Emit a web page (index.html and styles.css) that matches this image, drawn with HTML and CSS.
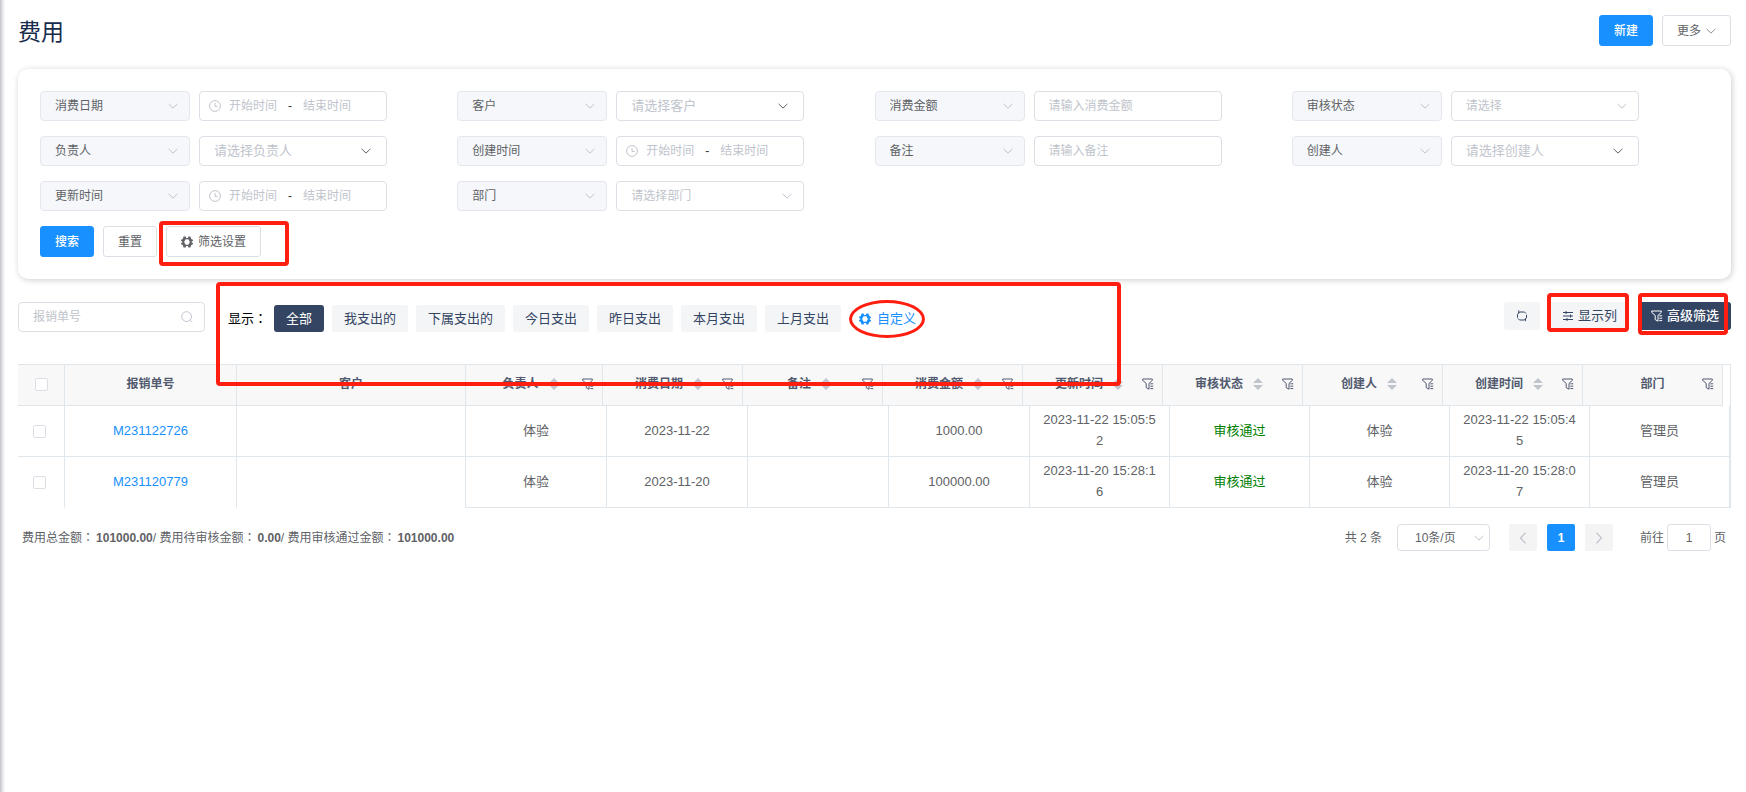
FILE: index.html
```html
<!DOCTYPE html>
<html lang="zh-CN">
<head>
<meta charset="utf-8">
<title>费用</title>
<link rel="stylesheet" href="styles.css">
</head>
<body>
<svg class="sprite" aria-hidden="true">
  <symbol id="chevron" viewBox="0 0 10 10"><path d="M.6 2.9 5 7.1l4.4-4.2" fill="none" stroke="currentColor"/></symbol>
  <symbol id="clock" viewBox="0 0 12 12"><circle cx="6" cy="6" r="5.4" fill="none" stroke="currentColor"/><path d="M6 3v3.4h2.6" fill="none" stroke="currentColor"/></symbol>
  <symbol id="gear" viewBox="0 0 12 12"><path fill="currentColor" fill-rule="evenodd" d="M2.600.6h2l.5 1.300h1.800L7.400.6h2l.9 2.300 1.600.8V5l-1.200.5v1l1.200.5v1.300l-1.600.8-.9 2.300h-2l-.5-1.300H5.100l-.5 1.300h-2l-.9-2.300-1.600-.8V7l1.200-.5v-1L.1 5V3.700l1.600-.8zM4.600 3.300 3.100 6l1.500 2.700h2.800L8.900 6 7.400 3.300z"/></symbol>
  <symbol id="search" viewBox="0 0 12 12"><circle cx="5.6" cy="5.6" r="4.9" fill="none" stroke="currentColor"/><path d="m9.2 9.4 2 2" stroke="currentColor"/></symbol>
  <symbol id="refresh" viewBox="0 0 12 12"><path d="M1.500 7.600V4.400L3.600 2H8.500L10 3.500M10.500 4.800v3L8.400 10H3.500L2 8.500M2.800.4v2.800M9.400 8.400v2.800" fill="none" stroke="currentColor"/></symbol>
  <symbol id="sliders" viewBox="0 0 12 12"><path d="M1 2.500h10M1 6h10M1 9.500h10M4 1v3M8.500 4.500v3M5 8v3" fill="none" stroke="currentColor"/></symbol>
  <symbol id="filter" viewBox="0 0 12 12"><path d="M.7 1h9.600v1.400L7 5.400v5.800L4.200 9.600V5.400L.7 2.400zM8.300 5.800h2.900M8.300 8.200h2.900M8.300 10.600h2.900" fill="none" stroke="currentColor"/></symbol>
  <symbol id="caret" viewBox="0 0 10 12"><path d="M5 0l5 5H0zM0 7h10l-5 5z" fill="currentColor"/></symbol>
</svg>
<main class="page">
  <header class="page-head">
    <h1>费用</h1>
    <div class="head-actions">
      <button class="btn primary">新建</button>
      <button class="btn">更多 <svg class="i10 soft"><use href="#chevron"/></svg></button>
    </div>
  </header>

  <form class="card">
    <div class="filters">
      <div class="filter">
        <div class="field key"><select aria-label="条件"><option>消费日期</option></select><svg class="i10"><use href="#chevron"/></svg></div>
        <div class="field range"><svg class="i12"><use href="#clock"/></svg><input aria-label="消费日期开始" placeholder="开始时间"><span>-</span><input aria-label="消费日期结束" placeholder="结束时间"></div>
      </div>
      <div class="filter">
        <div class="field key"><select aria-label="条件"><option>客户</option></select><svg class="i10"><use href="#chevron"/></svg></div>
        <div class="field pick"><select aria-label="客户"><option>请选择客户</option></select><svg class="i10"><use href="#chevron"/></svg></div>
      </div>
      <div class="filter">
        <div class="field key"><select aria-label="条件"><option>消费金额</option></select><svg class="i10"><use href="#chevron"/></svg></div>
        <div class="field"><input aria-label="消费金额" placeholder="请输入消费金额"></div>
      </div>
      <div class="filter">
        <div class="field key"><select aria-label="条件"><option>审核状态</option></select><svg class="i10"><use href="#chevron"/></svg></div>
        <div class="field choose"><select aria-label="审核状态"><option>请选择</option></select><svg class="i10"><use href="#chevron"/></svg></div>
      </div>
      <div class="filter">
        <div class="field key"><select aria-label="条件"><option>负责人</option></select><svg class="i10"><use href="#chevron"/></svg></div>
        <div class="field pick"><select aria-label="负责人"><option>请选择负责人</option></select><svg class="i10"><use href="#chevron"/></svg></div>
      </div>
      <div class="filter">
        <div class="field key"><select aria-label="条件"><option>创建时间</option></select><svg class="i10"><use href="#chevron"/></svg></div>
        <div class="field range"><svg class="i12"><use href="#clock"/></svg><input aria-label="创建时间开始" placeholder="开始时间"><span>-</span><input aria-label="创建时间结束" placeholder="结束时间"></div>
      </div>
      <div class="filter">
        <div class="field key"><select aria-label="条件"><option>备注</option></select><svg class="i10"><use href="#chevron"/></svg></div>
        <div class="field"><input aria-label="备注" placeholder="请输入备注"></div>
      </div>
      <div class="filter">
        <div class="field key"><select aria-label="条件"><option>创建人</option></select><svg class="i10"><use href="#chevron"/></svg></div>
        <div class="field pick"><select aria-label="创建人"><option>请选择创建人</option></select><svg class="i10"><use href="#chevron"/></svg></div>
      </div>
      <div class="filter">
        <div class="field key"><select aria-label="条件"><option>更新时间</option></select><svg class="i10"><use href="#chevron"/></svg></div>
        <div class="field range"><svg class="i12"><use href="#clock"/></svg><input aria-label="更新时间开始" placeholder="开始时间"><span>-</span><input aria-label="更新时间结束" placeholder="结束时间"></div>
      </div>
      <div class="filter">
        <div class="field key"><select aria-label="条件"><option>部门</option></select><svg class="i10"><use href="#chevron"/></svg></div>
        <div class="field choose"><select aria-label="部门"><option>请选择部门</option></select><svg class="i10"><use href="#chevron"/></svg></div>
      </div>
    </div>
    <div class="form-actions">
      <button type="button" class="btn primary">搜索</button>
      <button type="button" class="btn">重置</button>
      <div class="marked"><button type="button" class="btn"><svg class="i12"><use href="#gear"/></svg>筛选设置</button><i class="mark mark-settings"></i></div>
    </div>
  </form>

  <section class="toolbar">
    <div class="field search"><input aria-label="报销单号" placeholder="报销单号"><svg class="i12"><use href="#search"/></svg></div>
    <div class="views marked">
      <span class="views-label">显示<span lang="zh-Hant">：</span></span>
      <button class="chip active">全部</button>
      <button class="chip">我支出的</button>
      <button class="chip">下属支出的</button>
      <button class="chip">今日支出</button>
      <button class="chip">昨日支出</button>
      <button class="chip">本月支出</button>
      <button class="chip">上月支出</button>
      <div class="marked custom"><a href="#"><svg class="i12"><use href="#gear"/></svg>自定义</a><i class="mark mark-custom"></i></div>
      <i class="mark mark-views"></i>
    </div>
    <div class="tools">
      <button class="tool" aria-label="刷新"><svg class="i12"><use href="#refresh"/></svg></button>
      <div class="marked"><button class="tool"><svg class="i12"><use href="#sliders"/></svg>显示列</button><i class="mark mark-columns"></i></div>
      <div class="marked"><button class="tool dark"><svg class="i12"><use href="#filter"/></svg>高级筛选</button><i class="mark mark-advanced"></i></div>
    </div>
  </section>

  <section class="grid">
    <table class="thead">
      <colgroup><col class="c-check"><col class="c-no"><col class="c-customer"><col class="c-owner"><col><col><col><col><col><col><col><col></colgroup>
      <thead><tr>
        <th><input type="checkbox" aria-label="全选"></th>
        <th>报销单号</th>
        <th>客户</th>
        <th><div class="th"><span>负责人<svg class="caret"><use href="#caret"/></svg></span><svg class="i12"><use href="#filter"/></svg></div></th>
        <th><div class="th"><span>消费日期<svg class="caret"><use href="#caret"/></svg></span><svg class="i12"><use href="#filter"/></svg></div></th>
        <th><div class="th"><span>备注<svg class="caret"><use href="#caret"/></svg></span><svg class="i12"><use href="#filter"/></svg></div></th>
        <th><div class="th"><span>消费金额<svg class="caret"><use href="#caret"/></svg></span><svg class="i12"><use href="#filter"/></svg></div></th>
        <th><div class="th"><span>更新时间<svg class="caret"><use href="#caret"/></svg></span><svg class="i12"><use href="#filter"/></svg></div></th>
        <th><div class="th"><span>审核状态<svg class="caret"><use href="#caret"/></svg></span><svg class="i12"><use href="#filter"/></svg></div></th>
        <th><div class="th"><span>创建人<svg class="caret"><use href="#caret"/></svg></span><svg class="i12"><use href="#filter"/></svg></div></th>
        <th><div class="th"><span>创建时间<svg class="caret"><use href="#caret"/></svg></span><svg class="i12"><use href="#filter"/></svg></div></th>
        <th><div class="th"><span>部门</span><svg class="i12"><use href="#filter"/></svg></div></th>
      </tr></thead>
    </table>
    <table class="tbody">
      <colgroup><col class="c-check"><col class="c-no"><col class="c-customer"><col class="c-wide"><col class="c-wide"><col class="c-wide"><col class="c-wide"><col><col><col><col><col></colgroup>
      <tbody>
        <tr><td class="sel"><input type="checkbox" aria-label="选择 M231122726"></td><td><a href="#">M231122726</a></td><td></td><td>体验</td><td>2023-11-22</td><td></td><td>1000.00</td><td>2023-11-22 15:05:52</td><td class="ok">审核通过</td><td>体验</td><td>2023-11-22 15:05:45</td><td>管理员</td></tr>
        <tr><td class="sel"><input type="checkbox" aria-label="选择 M231120779"></td><td><a href="#">M231120779</a></td><td></td><td>体验</td><td>2023-11-20</td><td></td><td>100000.00</td><td>2023-11-20 15:28:16</td><td class="ok">审核通过</td><td>体验</td><td>2023-11-20 15:28:07</td><td>管理员</td></tr>
      </tbody>
    </table>
  </section>

  <footer class="foot">
    <p>费用总金额<span lang="zh-Hant">：</span><b>101000.00</b>/ 费用待审核金额<span lang="zh-Hant">：</span><b>0.00</b>/ 费用审核通过金额<span lang="zh-Hant">：</span><b>101000.00</b></p>
    <nav class="pager">
      <span>共 2 条</span>
      <div class="field size"><select aria-label="每页条数"><option>10条/页</option></select><svg class="i10"><use href="#chevron"/></svg></div>
      <div class="pages">
        <button class="pg" aria-label="上一页"><svg class="i12 prev"><use href="#chevron"/></svg></button>
        <button class="pg on">1</button>
        <button class="pg" aria-label="下一页"><svg class="i12 next"><use href="#chevron"/></svg></button>
      </div>
      <label class="jump">前往<input value="1">页</label>
    </nav>
  </footer>
</main>
</body>
</html>
```
FILE: styles.css
```css
* { box-sizing: border-box; }
body {
  margin: 0;
  min-height: 100vh;
  font: 12px/18px "Liberation Sans", "Noto Sans CJK SC", sans-serif;
  color: #606266;
  background: linear-gradient(90deg, #c3c3cd, #f5f5f8 4px, #fff 6px);
  text-spacing-trim: space-all;
}
button, input, select { font: inherit; color: inherit; }
a { color: #1890ff; text-decoration: none; }
svg { flex: none; }
[lang="zh-Hant"] { font-family: "Noto Sans CJK TC", sans-serif; line-height: 1; }
.sprite { display: none; }
.i10 { width: 10px; height: 10px; }
.i12 { width: 12px; height: 12px; }
.soft { color: #909399; }

.page { padding: 15px 15px 0 18px; }
.page-head { display: flex; justify-content: space-between; align-items: flex-start; height: 54px; }
h1 { margin: 0; font-size: 23px; line-height: 34px; font-weight: 400; color: #172b4d; }
.head-actions, .form-actions { display: flex; gap: 9px; }
.btn {
  display: flex;
  align-items: center;
  gap: 5px;
  height: 31px;
  padding: 0 14px;
  border: 1px solid #dcdfe6;
  border-radius: 3px;
  background: #fff;
}
.btn.primary { background: #1890ff; border-color: #1890ff; color: #fff; font-weight: 500; }

.card { padding: 22px; border-radius: 10px; background: #fff; box-shadow: 1px 1px 6px rgba(0, 0, 0, .2); }
.filters { display: grid; grid-template-columns: repeat(4, 1fr); row-gap: 15px; margin-bottom: 15px; }
.filter { display: flex; gap: 9px; }
.field {
  display: flex;
  align-items: center;
  width: 188px;
  height: 30px;
  border: 1px solid #dcdfe6;
  border-radius: 4px;
  background: #fff;
  color: #c0c4cc;
}
.field select, .field input {
  appearance: none;
  flex: 1;
  min-width: 0;
  height: 28px;
  padding: 0 0 0 14px;
  border: 0;
  outline: 0;
  background: none;
}
::placeholder { color: #c0c4cc; opacity: 1; }
.field > svg { margin-right: 11px; }
.key { width: 150px; background: #f5f7fa; border-color: #e4e7ed; }
.key select { color: #606266; }
.pick { font-size: 13px; }
.pick > svg { color: #606266; margin-right: 15px; }
.range { padding-left: 9px; }
.range > svg { margin-right: 8px; }
.range input { flex: none; width: 48px; padding: 0; }
.range span { width: 26px; text-align: center; color: #303133; }

.marked { position: relative; }
.mark { position: absolute; border: 4px solid #ff1e10; border-radius: 4px; pointer-events: none; }
.mark-settings { left: -7px; top: -5px; width: 130px; height: 45px; }
.mark-views { left: -12px; top: -23px; width: 905px; height: 104px; }
.mark-custom { left: -10px; top: -10px; width: 76px; height: 38px; border-width: 3px; border-radius: 50%; }
.mark-columns { left: -3px; top: -9px; width: 82px; height: 39px; }
.mark-advanced { left: -1px; top: -9px; width: 90px; height: 42px; }

.toolbar { display: flex; align-items: flex-start; padding: 23px 0 32px; }
.search { width: 187px; margin-right: 23px; }
.views { display: flex; align-items: center; gap: 8px; margin-top: 3px; font-size: 13px; }
.views-label { width: 38px; white-space: nowrap; color: #000; }
.chip { height: 27px; padding: 0 12px; border: 0; border-radius: 3px; background: #f4f5f7; color: #344563; white-space: nowrap; }
.chip.active { background: #344563; color: #fff; }
.custom { margin-left: 10px; }
.custom a { display: flex; align-items: center; gap: 6px; white-space: nowrap; }
.tools { display: flex; gap: 10px; margin-left: auto; }
.tool { display: flex; align-items: center; gap: 4px; height: 28px; padding: 0 12px; border: 0; border-radius: 3px; background: #f4f5f7; color: #344563; font-size: 13px; white-space: nowrap; }
.tool.dark { background: #344563; color: #fff; font-weight: 500; }

.grid { border-top: 1px solid #dfe6ec; border-right: 1px solid #dfe6ec; }
table { width: 100%; table-layout: fixed; border-collapse: separate; border-spacing: 0; }
.thead { width: calc(100% - 7px); }
.c-check { width: 47px; }
.c-no { width: 172px; }
.c-customer { width: 229px; }
.c-owner { width: 137px; }
.c-wide { width: 141px; }
th, td { padding: 0; text-align: center; border-right: 1px solid #dfe6ec; border-bottom: 1px solid #dfe6ec; }
th { height: 41px; padding-bottom: 2px; background: #f8f8f9; color: #515a6e; font-weight: 700; }
.th { display: grid; grid-template-columns: 20px 1fr 20px; align-items: center; }
.th > span { grid-column: 2; display: flex; justify-content: center; align-items: center; }
.caret { width: 10px; height: 12px; margin: 0 7px 0 10px; color: #c0c4cc; }
td { height: 51px; padding: 0 10px 2px; font-size: 13px; line-height: 21px; word-break: break-all; }
td.sel { padding: 0 4px 0 0; }
tr:last-child td:nth-child(-n+3) { border-bottom-color: transparent; }
.ok { color: #008000; }
input[type=checkbox] { appearance: none; display: block; width: 13px; height: 13px; margin: 0 auto; border: 1px solid #dcdfe6; border-radius: 2px; background: #fff; }

.foot { display: flex; justify-content: space-between; align-items: center; padding: 16px 5px 0 4px; }
.foot p { margin: 0; }
.foot b { margin-left: 2px; }
.pager { display: flex; align-items: center; }
.size { width: 93px; height: 27px; margin: 0 19px 0 15px; color: #606266; }
.size select { height: 25px; padding-left: 17px; }
.size > svg { margin-right: 5px; color: #c0c4cc; }
.pages { display: flex; gap: 10px; }
.pg { display: flex; align-items: center; justify-content: center; width: 28px; height: 27px; padding: 0; border: 0; border-radius: 2px; background: #f4f4f5; color: #c0c4cc; font-weight: 700; }
.pg.on { background: #1890ff; color: #fff; }
.prev { transform: rotate(90deg); }
.next { transform: rotate(-90deg); }
.jump { display: flex; align-items: center; gap: 3px; margin-left: 27px; }
.jump input { width: 44px; height: 27px; padding: 0; border: 1px solid #dcdfe6; border-radius: 3px; text-align: center; }
```
